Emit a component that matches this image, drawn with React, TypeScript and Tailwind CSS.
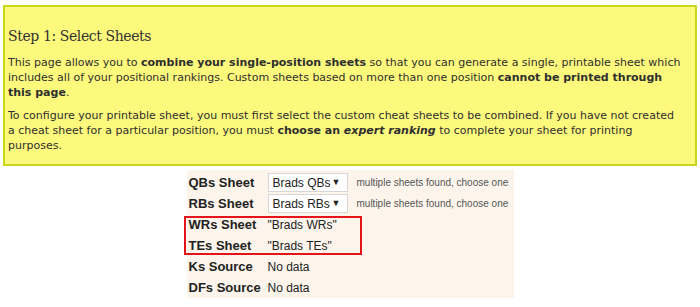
import React from "react";

const rows = [
  { label: "QBs Sheet", select: "Brads QBs" },
  { label: "RBs Sheet", select: "Brads RBs" },
];

function SelectBox({ value }: { value: string }) {
  return (
    <div className="flex h-[19px] w-[80px] items-center justify-between border border-[#d6d6d6] bg-white pl-[4px] pr-[6px] text-[12px] font-normal text-[#222]">
      <span>{value}</span>
      <span className="text-[9px]">▼</span>
    </div>
  );
}

function Row({ label, children }: { label: string; children: React.ReactNode }) {
  return (
    <div className="flex h-[21px] items-center whitespace-nowrap">
      <div className="w-[79px] text-[13px] font-bold">{label}</div>
      {children}
    </div>
  );
}

export default function App() {
  return (
    <div className="w-[700px] bg-white pt-[5px] font-['DejaVu_Sans',sans-serif]">
      <div className="mx-[3px] border-2 border-[#c9d61c] bg-[#fcf97c] px-[3px] pb-[11px] pt-[18px] text-[11px] leading-[15px] text-[#2f2f2f]">
        <h3 className="mb-[8px] font-['DejaVu_Serif',serif] text-[14px] leading-[22px] tracking-[-0.4px] text-[#333]">
          Step 1: Select Sheets
        </h3>
        <p className="mb-[8px]">
          This page allows you to <b>combine your single-position sheets</b> so that you can
          generate a single, printable sheet which
          <br />
          includes all of your positional rankings. Custom sheets based on more than one position{" "}
          <b>cannot be printed through</b>
          <br />
          <b>this page</b>.
        </p>
        <p>
          To configure your printable sheet, you must first select the custom cheat sheets to
          be combined. If you have not created
          <br />
          a cheat sheet for a particular position, you must{" "}
          <b>
            choose an <i>expert ranking</i>
          </b>{" "}
          to complete your sheet for printing
          <br />
          purposes.
        </p>
      </div>

      <div className="relative mx-auto mt-[4px] w-[327px] bg-[#fdf5ec] pl-[2px] pt-[2px] font-['Liberation_Sans',sans-serif] text-[12px] text-[#222]">
        {rows.map((r) => (
          <Row key={r.label} label={r.label}>
            <SelectBox value={r.select} />
            <span className="ml-[9px] text-[10px] text-[#555]">multiple sheets found, choose one</span>
          </Row>
        ))}
        <Row label="WRs Sheet">
          <span>"Brads WRs"</span>
        </Row>
        <Row label="TEs Sheet">
          <span>"Brads TEs"</span>
        </Row>
        <Row label="Ks Source">
          <span>No data</span>
        </Row>
        <Row label="DFs Source">
          <span>No data</span>
        </Row>
        <div className="pointer-events-none absolute left-[-3px] top-[46px] h-[39px] w-[178px] border-2 border-[#e5141b]" />
      </div>
    </div>
  );
}
